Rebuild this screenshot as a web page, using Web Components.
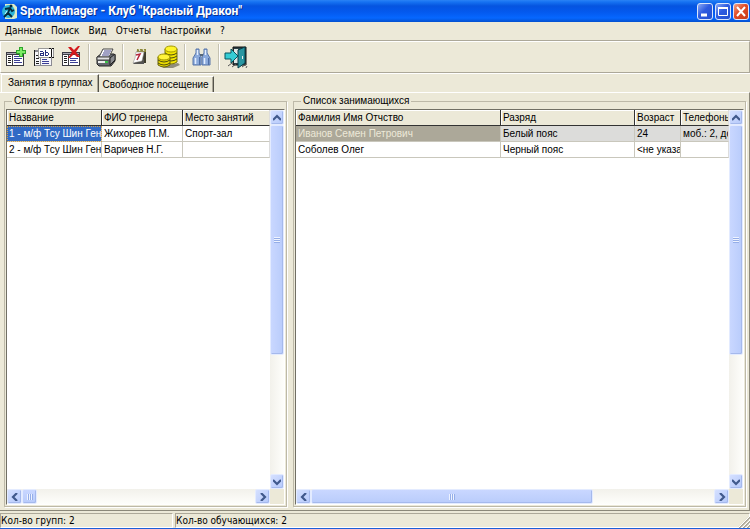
<!DOCTYPE html>
<html lang="ru">
<head>
<meta charset="utf-8">
<title>SportManager - Клуб "Красный Дракон"</title>
<style>
html,body{height:100%;margin:0}
body{--grid-font:10px/14px "Liberation Sans",Arial,sans-serif;background:#ece9d8;color:#000;font:10px/14px "DejaVu Sans Condensed","DejaVu Sans",sans-serif;overflow:hidden}
</style>
</head>
<body>
<sport-window>
  <title-bar slot="title">SportManager - Клуб "Красный Дракон"</title-bar>
  <menu-bar slot="menu" items="Данные|Поиск|Вид|Отчеты|Настройки|?"></menu-bar>
  <tool-bar slot="tools">
    <tool-button label="Добавить группу">
      <svg width="22" height="22" shape-rendering="crispEdges"><path d="M1 6h18v14H1z" fill="#3c3c44"/><path d="M2 7h16v1H2z" fill="#a9a9b4"/><path d="M2 9h5v10H2zM8 9h10v10H8z" fill="#fff"/><path d="M3 10h3v1H3zM3 12h3v1H3zM3 14h3v1H3zM3 16h3v1H3z" fill="#222"/><path d="M9 10h7v1H9zM9 12h8v1H9zM9 14h6v1H9zM9 16h8v1H9z" fill="#3b3f96"/><path d="M14 1h4v3h3v4h-3v3h-4V8h-3V4h3z" fill="#2da52c"/><path d="M15 2h2v3h3v2h-3v3h-2V7h-3V5h3z" fill="#7bea64"/></svg>
    </tool-button>
    <tool-button label="Переименовать группу">
      <svg width="22" height="22" shape-rendering="crispEdges"><path d="M1 4h18v16H1z" fill="#8b8b93"/><path d="M2 6h5v13H2zM8 6h10v13H8z" fill="#f6f6fa"/><path d="M1 4h1v16H1zM3 9h3v1H3zM3 12h3v1H3zM3 15h3v1H3zM3 17h3v1H3z" fill="#222"/><path d="M9 13h5v1H9zM9 15h7v1H9zM9 17h7v1H9z" fill="#3b3f96"/><path d="M5 2h16v10H5z" fill="#999"/><path d="M6 3h14v8H6z" fill="#fff"/><path d="M7 5h3v1H7zM7 7h4v1H7zM7 9h4v1H7zM10 6h1v3h-1zM7 8h1v1H7zM12 4h1v6h-1zM13 6h2v1h-2zM13 9h2v1h-2zM15 7h1v2h-1z" fill="#26307f"/><path d="M16 2h2v1h-2zM19 2h2v1h-2zM18 3h1v8h-1zM16 11h2v1h-2zM19 11h2v1h-2z" fill="#111"/></svg>
    </tool-button>
    <tool-button label="Удалить группу">
      <svg width="22" height="22" shape-rendering="crispEdges"><path d="M1 6h18v14H1z" fill="#3c3c44"/><path d="M2 7h16v1H2z" fill="#a9a9b4"/><path d="M2 9h5v10H2zM8 9h10v10H8z" fill="#fff"/><path d="M3 10h3v1H3zM3 12h3v1H3zM3 14h3v1H3zM3 16h3v1H3z" fill="#222"/><path d="M9 12h8v1H9zM9 14h6v1H9zM9 16h8v1H9z" fill="#3b3f96"/><path d="M7 1h3l3 3 4-4h2l-4 6 4 5h-3l-3-3-4 4H7l4-6z" fill="#d3181b" shape-rendering="auto"/></svg>
    </tool-button>
    <tool-separator></tool-separator>
    <tool-button label="Печать">
      <svg width="22" height="22"><path d="M2 11l4-3h13l1 1v6l-4 5H4l-2-2z" fill="#66686e" stroke="#222"/><path d="M8 3h10l-4 8H4z" fill="#fff" stroke="#444"/><path d="M9 5h7M8 7h7M7 9h7" stroke="#44448a"/><path d="M2 11h13v3H2z" fill="#e2e2e2" stroke="#444"/><path d="M15 12l5-4v6l-5 5z" fill="#8a8c90" stroke="#222"/><path d="M3 16h10" stroke="#eee" stroke-width="2"/><path d="M10 16h3" stroke="#3bc247" stroke-width="2"/></svg>
    </tool-button>
    <tool-separator></tool-separator>
    <tool-button label="Расписание">
      <svg width="22" height="22"><path d="M8 4h9v13H6z" fill="#3f3d2c"/><path d="M8 3h9v3H8z" fill="#8d8839"/><path d="M7 6h8l-2 9-9 2 2-5z" fill="#fff" stroke="#999" stroke-width=".6"/><path d="M4 17l9-1 2-4v6H5z" fill="#555"/><path d="M7 9l4-1-3 6" fill="none" stroke="#b3263b" stroke-width="1.5"/><path d="M10 3l1 2M14 3l1 2" stroke="#fff"/></svg>
    </tool-button>
    <tool-button label="Оплата">
      <svg width="24" height="24"><path d="M11 20l11-2 2 2-7 3H6z" fill="#918d7c"/><path d="M9 4v13q6 4 12 0V4z" fill="#f4e600" stroke="#77700a"/><path d="M9 8q6 4 12 0M9 11q6 4 12 0M9 14q6 4 12 0" fill="none" stroke="#4f4c10"/><ellipse cx="15" cy="4" rx="6" ry="3" fill="#fff52a" stroke="#a39900"/><path d="M2 12v8q6 4 12 0v-8z" fill="#eadb00" stroke="#66600a"/><path d="M2 15q6 4 12 0M2 18q6 4 12 0" fill="none" stroke="#4f4c10"/><ellipse cx="8" cy="12" rx="6" ry="3" fill="#fff43b" stroke="#9c9300"/></svg>
    </tool-button>
    <tool-separator></tool-separator>
    <tool-button label="Поиск">
      <svg width="22" height="22"><path d="M5 3h3v4l2 4v8H2v-7l3-5zM13 3h3v4l3 5v7h-8v-8l2-4z" fill="#8cabdc" stroke="#5674a8"/><path d="M4.500 12v6M13.500 12v6M6.500 4v5M14.500 4v5" stroke="#e3eeff" stroke-width="1.500"/><path d="M8.500 11v8M17.500 12v7" stroke="#4f6ea6"/><path d="M9 9h3" stroke="#567" stroke-width="2"/></svg>
    </tool-button>
    <tool-separator></tool-separator>
    <tool-button label="Выход">
      <svg width="24" height="24"><path d="M9 2h13v18H9z" fill="#2a3f45" stroke="#111"/><path d="M10 4h4v14h-4z" fill="#dfe6e3"/><path d="M14 5l7-3v16l-7 5z" fill="#2a97a2" stroke="#073f49"/><path d="M18.500 11v3" stroke="#eee"/><path d="M1 8h6V4l7 7-7 7v-4H1z" fill="#35cdd4" stroke="#07555e"/><path d="M4 21l4-3M8 22l4-3M18 22l4-3M22 23l1-2" stroke="#555"/></svg>
    </tool-button>
  </tool-bar>
  <tab-strip slot="tabs" items="Занятия в группах|Свободное посещение"></tab-strip>
  <group-box slot="left" caption="Список групп">
    <data-grid id="groups" v-size="66" h-size="4"></data-grid>
  </group-box>
  <group-box slot="right" caption="Список занимающихся">
    <data-grid id="people" v-size="66" h-size="70"></data-grid>
  </group-box>
  <status-bar slot="status"><span>Кол-во групп: 2</span><span>Кол-во обучающихся: 2</span></status-bar>
</sport-window>
<script>
const define = (name, render, after) => customElements.define(name, class extends HTMLElement {
  connectedCallback() {
    if (this.shadowRoot) return;
    this.attachShadow({mode: 'open'}).innerHTML = render(this);
    if (after) after(this);
  }
});
const parts = el => el.getAttribute('items').split('|');

define('sport-window', () => `<style>
:host{display:flex;flex-direction:column;height:100vh;border-bottom:1px solid #1c5fd8;box-sizing:border-box}
.page{flex:1;min-height:0;display:flex;gap:6px;padding:2px 3px 3px 4px;border-top:1px solid #fff;border-bottom:1px solid #8b887a;border-right:1px solid #8b887a;box-sizing:border-box}
slot[name=left]::slotted(*){flex:0 0 283px}
slot[name=right]::slotted(*){flex:1;min-width:0}
</style><slot name="title"></slot><slot name="menu"></slot><slot name="tools"></slot><slot name="tabs"></slot>
<main class="page"><slot name="left"></slot><slot name="right"></slot></main><slot name="status"></slot>`);

define('title-bar', () => `<style>
:host{display:flex;align-items:center;gap:3px;height:22px;padding:0 1px 0 2px;background:linear-gradient(#2a83f5,#1672f2 2px,#0554e0 6px,#0459ee 12px,#0667ff 18px,#0450cf);color:#fff;font:bold 12px/22px Roboto,"Noto Sans",sans-serif;text-shadow:1px 1px #0a318f}
h1{font:inherit;margin:0;flex:1;white-space:nowrap;overflow:hidden}
.b{display:flex;gap:2px}
button{width:16px;height:17px;padding:0;border:1px solid #dbe6fb;border-radius:3px;background:linear-gradient(135deg,#8ba9f5,#2d5be0 45%,#2450cf);display:block}
button:last-child{background:linear-gradient(135deg,#f3a48b,#df4a25 45%,#c83b18)}
svg{display:block}
</style><svg width="15" height="16"><path d="M3 1h9l3 3v11l-3 1H3z" fill="#dcebc8"/><circle cx="6.500" cy="8.500" r="6.500" fill="#2cb4d8"/><circle cx="9" cy="3" r="1.500" fill="#042a3c"/><path d="M3 6l5-1 2 3 2-1M8 5L6 10l4 4M6 10l-4 4" fill="none" stroke="#042a3c" stroke-width="1.800"/><path d="M3 11l2-3" stroke="#c8ffff"/></svg>
<h1><slot></slot></h1><div class="b">
<button aria-label="Свернуть"><svg width="14" height="15"><path d="M3 11h6" stroke="#fff" stroke-width="3"/></svg></button>
<button aria-label="Развернуть"><svg width="14" height="15"><path d="M2.500 3.500h9v8h-9z" fill="none" stroke="#fff"/><path d="M2 4h10" stroke="#fff" stroke-width="2"/></svg></button>
<button aria-label="Закрыть"><svg width="14" height="15"><path d="M3 3l8 9M11 3l-8 9" stroke="#fff" stroke-width="2"/></svg></button></div>`);

define('menu-bar', el => `<style>
:host{display:block;height:18px;border-bottom:1px solid #aca899}
nav{display:flex;gap:9px;padding:1px 5px 0}
button{border:0;background:none;padding:0;font:inherit;line-height:16px;color:#000}
</style><nav>${parts(el).map(t => `<button>${t}</button>`).join('')}</nav>`);

define('tool-bar', () => `<style>
:host{display:flex;align-items:center;height:30px;padding-left:1px;border:1px solid #aca899;border-top-color:#fff;border-left-color:#fff}
</style><slot></slot>`);
define('tool-separator', () => `<style>
:host{flex:0 0 6px;height:26px;display:flex;justify-content:center}
i{width:1px;background:#c5c2b2;border-right:1px solid #fff}
</style><i></i>`);
define('tool-button', el => `<style>
:host{flex:0 0 28px}
button{display:flex;align-items:center;justify-content:center;width:100%;height:26px;border:0;padding:0;background:none}
</style><button aria-label="${el.getAttribute('label')}"><slot></slot></button>`);

define('tab-strip', el => `<style>
:host{display:flex;align-items:flex-end;height:18px;padding-left:1px;border-top:1px solid #fff;font:var(--grid-font)}
button{font:inherit;color:#000;background:#ece9d8;border:0;border-right:1px solid #55534a;border-top:1px solid #fff;padding:0 4px 0 3px;height:16px;white-space:nowrap;box-shadow:inset -1px 0 #aca899}
button[aria-selected=true]{height:18px;padding:0 6px 2px;border-left:1px solid #fff}
[role=tablist]{display:flex;align-items:flex-end}
</style><div role="tablist">${parts(el).map((t, i) => `<button role="tab" aria-selected="${!i}">${t}</button>`).join('')}</div>`);

define('group-box', el => `<style>
:host{display:flex;min-height:0;font:var(--grid-font)}
fieldset{flex:1;min-width:0;min-height:0;margin:0;padding:2px 1px 1px;border:1px solid #bdb9a8;box-shadow:1px 1px #fff;display:flex;box-sizing:border-box}
legend{padding:0 2px;margin-left:6px;height:12px;line-height:12px}
::slotted(*){flex:1;min-width:0}
</style><fieldset><legend>${el.getAttribute('caption')}</legend><slot></slot></fieldset>`);

define('scroll-bar', el => {
  const v = el.hasAttribute('vertical');
  const arrow = d => `<svg width="8" height="8"><path d="${d}" fill="none" stroke="#40598c" stroke-width="2.200"/></svg>`;
  return `<style>
:host{display:flex;flex-direction:${v ? 'column' : 'row'};background:linear-gradient(${v ? '90deg' : '180deg'},#f2f1eb,#fefefb);min-width:0;min-height:0}
button{flex:0 0 15px;padding:0;border:1px solid #e3ebff;border-radius:2px;background:linear-gradient(135deg,#d5e0ff,#b5c9fb);box-shadow:inset -1px -1px #a5b9ec;display:flex;align-items:center;justify-content:center}
.track{flex:1;display:flex;flex-direction:inherit;min-height:0;min-width:0}
.thumb{flex:0 0 ${el.getAttribute('size')}%;min-${v ? 'height' : 'width'}:15px;box-sizing:border-box;border:1px solid #e3ebff;border-radius:2px;background:linear-gradient(${v ? '90deg' : '180deg'},#c9d7ff,#b9ccfb);box-shadow:inset -1px -1px #a5b9ec;display:flex;align-items:center;justify-content:center}
i{width:6px;height:6px;background:repeating-linear-gradient(${v ? '180deg' : '90deg'},#eef3ff 0 1px,#95aee8 1px 2px)}
</style><button aria-label="Назад">${arrow(v ? 'M0 6l4-4 4 4' : 'M6 0L2 4l4 4')}</button><div class="track"><div class="thumb"><i></i></div></div><button aria-label="Вперед">${arrow(v ? 'M0 2l4 4 4-4' : 'M2 0l4 4-4 4')}</button>`;
});

define('data-grid', el => `<style>
:host{display:grid;grid-template-columns:minmax(0,1fr) 14px;grid-template-rows:minmax(0,1fr) 15px;border:1px solid #716f64;border-right-color:#fff;border-bottom-color:#fff;box-sizing:border-box;background:#ece9d8}
.view{background:#fff;overflow:hidden}
table{border-collapse:separate;border-spacing:0;table-layout:fixed;width:100%}
th,td{height:15px;line-height:15px;padding:0 0 0 2px;text-align:left;font-weight:normal;white-space:nowrap;overflow:hidden;border-right:1px solid #c9c7bc;border-bottom:1px solid #c9c7bc}
th{background:#ece9d8;border-color:#333;box-shadow:inset 1px 1px #fff}
th:last-child,td:last-child{border-right-color:#ddd}
.active{background:#316ac5;color:#fff;outline:1px dotted #d5a24a;outline-offset:-1px}
.muted td{background:#dcdcda}
.muted .dim{background:#aca899;color:#ece9d8}
</style><div class="view"><table></table></div><scroll-bar vertical size="${el.getAttribute('v-size')}"></scroll-bar><scroll-bar size="${el.getAttribute('h-size')}"></scroll-bar>`,
el => {
  const d = {
    groups: {w: ['95px', '81px', ''], h: ['Название', 'ФИО тренера', 'Место занятий'],
      r: [['1 - м/ф Тсу Шин Ген', 'Жихорев П.М.', 'Спорт-зал'], ['2 - м/ф Тсу Шин Ген', 'Варичев Н.Г.', '']], c: 'active', row: ''},
    people: {w: ['205px', '134px', '46px', ''], h: ['Фамилия Имя Отчство', 'Разряд', 'Возраст', 'Телефоны'],
      r: [['Иванов Семен Петрович', 'Белый пояс', '24', 'моб.: 2, до'], ['Соболев Олег', 'Черный пояс', '&lt;не указа', '']], c: 'dim', row: 'muted'}
  }[el.id];
  el.shadowRoot.querySelector('table').innerHTML =
    `<colgroup>${d.w.map(w => `<col style="width:${w || 'auto'}">`).join('')}</colgroup>
    <thead><tr>${d.h.map(t => `<th scope="col">${t}</th>`).join('')}</tr></thead>
    <tbody>${d.r.map((r, i) => `<tr class="${i ? '' : d.row}">${r.map((t, j) => `<td class="${i || j ? '' : d.c}">${t}</td>`).join('')}</tr>`).join('')}</tbody>`;
});

define('status-bar', () => `<style>
:host{display:flex;gap:2px;height:15px;padding-top:2px;position:relative}
::slotted(span){box-sizing:border-box;border:1px solid #aca899;border-right-color:#fff;border-bottom-color:#fff;line-height:14px;white-space:nowrap;flex:0 0 173px}
::slotted(span:last-of-type){flex:1}
svg{position:absolute;right:0;bottom:0}
</style><slot></slot><svg width="12" height="12"><path d="M1 12L12 1M5 12l7-7M9 12l3-3" stroke="#aca899" stroke-width="2"/><path d="M0 12L12 0M4 12l8-8M8 12l4-4" stroke="#fff"/></svg>`);
</script>
</body>
</html>
